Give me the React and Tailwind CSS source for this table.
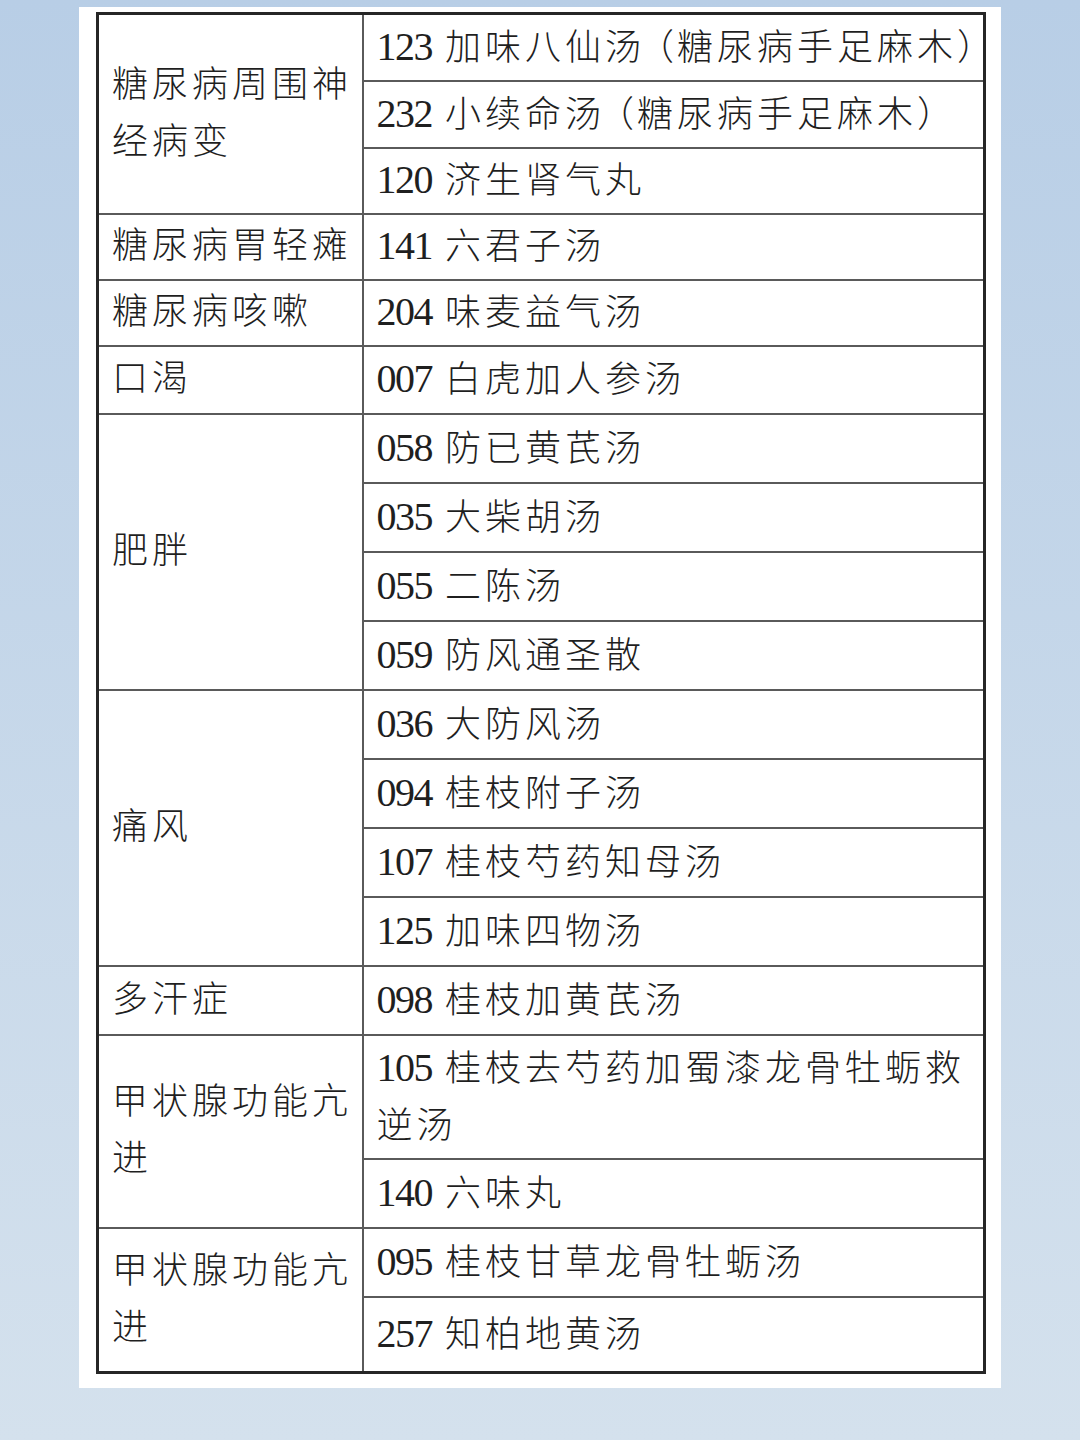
const rows = [
  { label: "糖尿病周围神经病变", h: [67, 67, 66], items: ["123 加味八仙汤（糖尿病手足麻木）", "232 小续命汤（糖尿病手足麻木）", "120 济生肾气丸"] },
  { label: "糖尿病胃轻瘫", h: [66], items: ["141 六君子汤"] },
  { label: "糖尿病咳嗽", h: [66], items: ["204 味麦益气汤"] },
  { label: "口渴", h: [68], items: ["007 白虎加人参汤"] },
  { label: "肥胖", h: [69, 69, 69, 69], items: ["058 防已黄芪汤", "035 大柴胡汤", "055 二陈汤", "059 防风通圣散"] },
  { label: "痛风", h: [69, 69, 69, 69], items: ["036 大防风汤", "094 桂枝附子汤", "107 桂枝芍药知母汤", "125 加味四物汤"] },
  { label: "多汗症", h: [69], items: ["098 桂枝加黄芪汤"] },
  { label: "甲状腺功能亢进", h: [124, 69], items: ["105 桂枝去芍药加蜀漆龙骨牡蛎救逆汤", "140 六味丸"] },
  { label: "甲状腺功能亢进", h: [69, 76], items: ["095 桂枝甘草龙骨牡蛎汤", "257 知柏地黄汤"] },
];

// full-width brackets sit tighter in the original typesetting
const Name = ({ text }) =>
  text.split(/([（）])/).map((part, i) => {
    if (part === "（") return <span key={i} className="ml-[-7px] tracking-[3px]">{part}</span>;
    if (part === "）") return <span key={i} className="tracking-[-13px]">{part}</span>;
    return <span key={i}>{part}</span>;
  });

const Formula = ({ text }) => {
  const [num, ...rest] = text.split(" ");
  return (
    <>
      <span className="text-[40px] tracking-[-1.5px]">{num}</span>
      <span> </span>
      <Name text={rest.join(" ")} />
    </>
  );
};

export default function App() {
  return (
    <div className="min-h-[1440px] w-[1080px] bg-gradient-to-b from-[#b8cee6] to-[#d4e1ed] pt-[7px] pl-[79px]">
      <div className="w-[922px] bg-white pt-[5px] pl-[17px] pb-[14px]">
        <table
          className="w-[890px] table-fixed border-collapse border-[3px] border-[#262626] text-[#1f1f1f] text-[36px] leading-[57px] tracking-[4px] font-light"
          style={{ fontFamily: '"Liberation Serif", "Noto Sans CJK SC", serif' }}
        >
          <colgroup>
            <col className="w-[265px]" />
            <col />
          </colgroup>
          <tbody>
            {rows.map((group, gi) =>
              group.items.map((item, i) => (
                <tr key={gi + "-" + i} style={{ height: group.h[i] }}>
                  {i === 0 && (
                    <td
                      rowSpan={group.items.length}
                      className="border-2 border-[#5a5a5a] pl-[13px] pr-[4px] align-middle"
                    >
                      {group.label}
                    </td>
                  )}
                  <td
                    className={
                      item.includes("（")
                        ? "border-2 border-[#5a5a5a] pl-[13px] pr-0 align-middle whitespace-nowrap"
                        : "border-2 border-[#5a5a5a] pl-[13px] pr-[4px] align-middle"
                    }
                  >
                    <Formula text={item} />
                  </td>
                </tr>
              ))
            )}
          </tbody>
        </table>
      </div>
    </div>
  );
}
